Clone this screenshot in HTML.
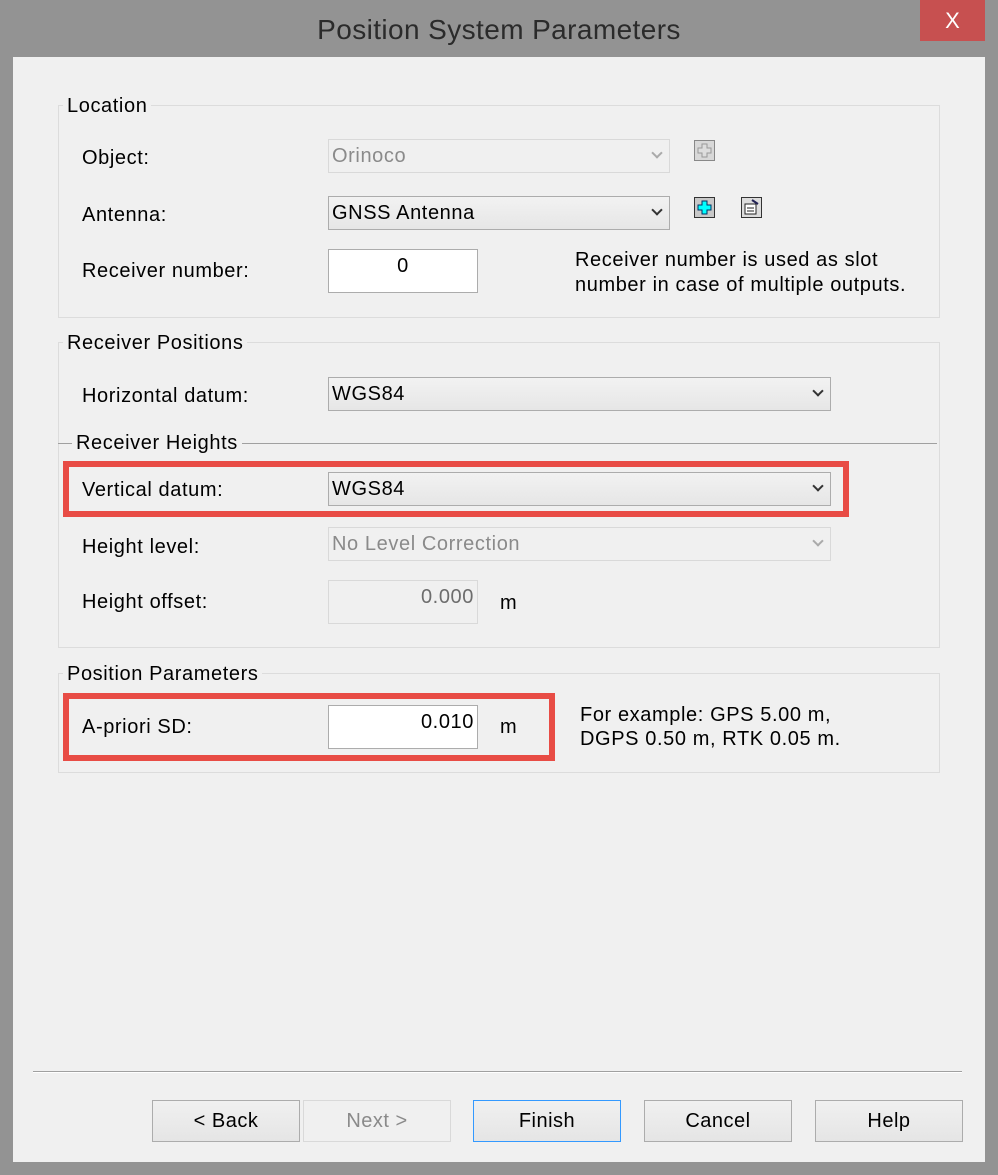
<!DOCTYPE html>
<html><head><meta charset="utf-8"><style>
*{margin:0;padding:0;box-sizing:border-box}
body{width:998px;height:1175px;background:#939393;font-family:"Liberation Sans",Arial,sans-serif;position:relative;overflow:hidden;color:#000}
.a{position:absolute}
.t{font-size:20px;letter-spacing:0.6px;white-space:nowrap;line-height:22px}
.title{left:0;width:998px;top:14px;text-align:center;font-size:28px;color:#2b2b2b;letter-spacing:0.4px}
.close{left:920px;top:0;width:65px;height:41px;background:#c75050;color:#fff;font-size:22px;text-align:center;line-height:41px}
.content{left:13px;top:57px;width:972px;height:1105px;background:#f0f0f0}
.grp{border:1px solid #dcdcdc}
.gl{background:#f0f0f0;padding:0 4px}
.combo{border:1px solid #acacac;background:linear-gradient(#f2f2f2,#e6e6e6);height:34px}
.combo span{position:absolute;left:3px;top:5px;font-size:20px;letter-spacing:0.6px}
.combo i{position:absolute;right:8px;top:9px;width:8px;height:8px;border-right:2px solid #333;border-bottom:2px solid #333;transform:rotate(45deg)}
.dis{background:#f0f0f0;border-color:#d9d9d9;color:#8a8a8a}
.dis i{border-color:#aaa}
.inp{border:1px solid #acacac;background:#fff;font-size:20px;letter-spacing:0.6px}
.red{border:6px solid #e84c45}
.btn{top:1100px;height:42px;width:148px;border:1px solid #acacac;background:linear-gradient(#f0f0f0,#e5e5e5);text-align:center;line-height:40px;font-size:20px;letter-spacing:0.5px}
.ico{width:21px;height:21px;border:1px solid #333;background:#c8c8c8}
</style></head><body>
<div class="a title">Position System Parameters</div>
<div class="a close">X</div>
<div class="a content"></div>

<div class="a grp" style="left:58px;top:105px;width:882px;height:213px"></div>
<div class="a t gl" style="left:63px;top:95px">Location</div>
<div class="a t" style="left:82px;top:147px">Object:</div>
<div class="a combo dis" style="left:328px;top:139px;width:342px"><span>Orinoco</span><i></i></div>
<div class="a ico" style="left:694px;top:140px;border-color:#888;background:#d8d8d8"><svg width="19" height="19"><path d="M7 3h5v4h4v5h-4v4H7v-4H3V7h4z" fill="#ddd" stroke="#999"/></svg></div>
<div class="a t" style="left:82px;top:204px">Antenna:</div>
<div class="a combo" style="left:328px;top:196px;width:342px"><span>GNSS Antenna</span><i></i></div>
<div class="a ico" style="left:694px;top:197px"><svg width="19" height="19"><path d="M7 3h5v4h4v5h-4v4H7v-4H3V7h4z" fill="#0ff" stroke="#036"/></svg></div>
<div class="a ico" style="left:741px;top:197px;background:#ddd"><svg width="19" height="19"><rect x="3" y="6" width="11" height="10" fill="#fff" stroke="#222"/><path d="M5 10h7M5 13h7" stroke="#222"/><path d="M10 2l6 4" stroke="#225" stroke-width="2"/></svg></div>
<div class="a t" style="left:82px;top:260px">Receiver number:</div>
<div class="a inp" style="left:328px;top:249px;width:150px;height:44px;text-align:center;padding-top:5px">0</div>
<div class="a t" style="left:575px;top:248px;line-height:25px">Receiver number is used as slot<br>number in case of multiple outputs.</div>

<div class="a grp" style="left:58px;top:342px;width:882px;height:306px"></div>
<div class="a t gl" style="left:63px;top:332px">Receiver Positions</div>
<div class="a t" style="left:82px;top:385px">Horizontal datum:</div>
<div class="a combo" style="left:328px;top:377px;width:503px"><span>WGS84</span><i></i></div>
<div class="a" style="left:58px;top:443px;width:879px;height:1px;background:#a0a0a0"></div>
<div class="a t gl" style="left:72px;top:432px">Receiver Heights</div>
<div class="a red" style="left:63px;top:461px;width:786px;height:56px"></div>
<div class="a t" style="left:82px;top:479px">Vertical datum:</div>
<div class="a combo" style="left:328px;top:472px;width:503px"><span>WGS84</span><i></i></div>
<div class="a t" style="left:82px;top:536px">Height level:</div>
<div class="a combo dis" style="left:328px;top:527px;width:503px"><span>No Level Correction</span><i></i></div>
<div class="a t" style="left:82px;top:591px">Height offset:</div>
<div class="a inp" style="left:328px;top:580px;width:150px;height:44px;background:#f0f0f0;border-color:#d9d9d9;color:#6d6d6d;text-align:right;padding:5px 3px 0 0">0.000</div>
<div class="a t" style="left:500px;top:592px">m</div>

<div class="a grp" style="left:58px;top:673px;width:882px;height:100px"></div>
<div class="a t gl" style="left:63px;top:663px">Position Parameters</div>
<div class="a red" style="left:63px;top:693px;width:492px;height:68px"></div>
<div class="a t" style="left:82px;top:716px">A-priori SD:</div>
<div class="a inp" style="left:328px;top:705px;width:150px;height:44px;text-align:right;padding:5px 3px 0 0">0.010</div>
<div class="a t" style="left:500px;top:716px">m</div>
<div class="a t" style="left:580px;top:703px;line-height:24px">For example: GPS 5.00 m,<br>DGPS 0.50 m, RTK 0.05 m.</div>

<div class="a" style="left:33px;top:1071px;width:929px;height:1px;background:#a0a0a0"></div>
<div class="a" style="left:33px;top:1072px;width:929px;height:1px;background:#fff"></div>

<div class="a btn" style="left:152px">&lt; Back</div>
<div class="a btn" style="left:303px;color:#8a8a8a;border-color:#d9d9d9;background:#f0f0f0">Next &gt;</div>
<div class="a btn" style="left:473px;border-color:#3399ff">Finish</div>
<div class="a btn" style="left:644px">Cancel</div>
<div class="a btn" style="left:815px">Help</div>
</body></html>
